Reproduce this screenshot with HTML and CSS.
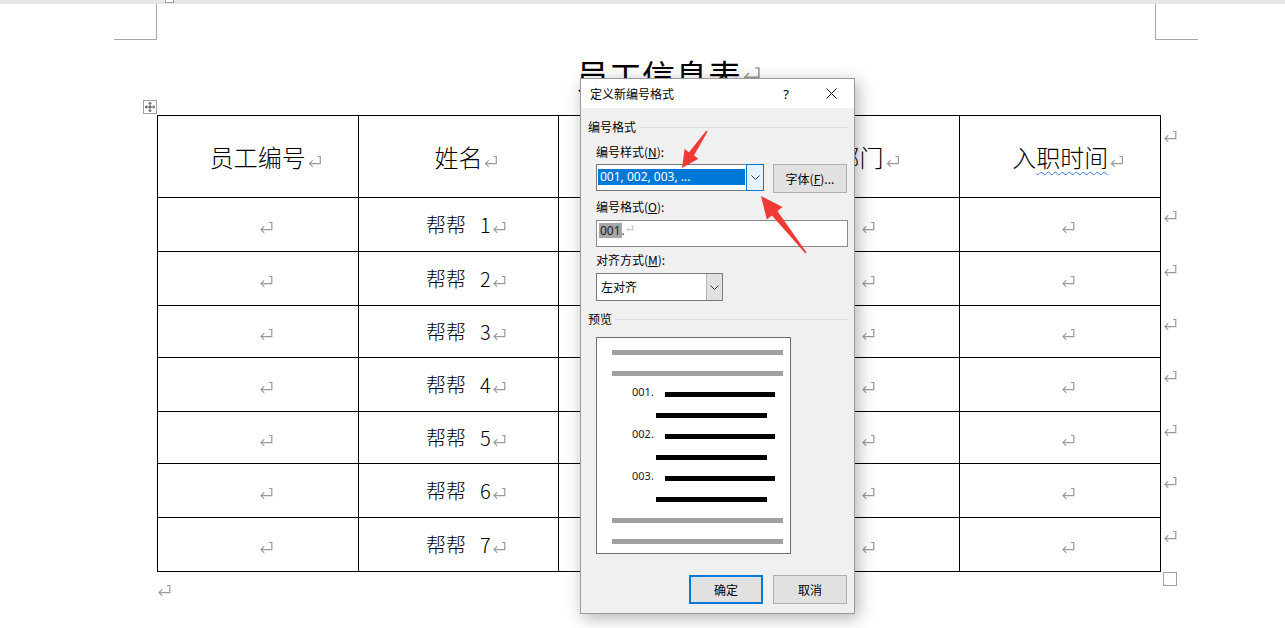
FILE: index.html
```html
<!DOCTYPE html>
<html lang="zh-CN">
<head>
    <meta charset="UTF-8">
    <title>员工信息表 - 定义新编号格式</title>
    <link rel="stylesheet" href="styles.css">
</head>
<body>

<!-- paragraph mark, reused everywhere -->
<svg class="defs" width="0" height="0">
    <symbol id="pm" viewBox="0 0 15 13">
        <path d="M10 1.5 H12.8 V8.6 H2" fill="none" stroke="currentColor" stroke-width="1.2"/>
        <path d="M5.2 5.4 L2 8.6 L5.2 11.8" fill="none" stroke="currentColor" stroke-width="1.2"/>
    </symbol>
    <symbol id="chev" viewBox="0 0 9 5">
        <path d="M0.5 0.5 L4.5 4.5 L8.5 0.5" fill="none" stroke="currentColor" stroke-width="1"/>
    </symbol>
</svg>

<div class="topbar"><span class="topbox"></span></div>

<div class="crop-row">
    <span class="crop crop-left"></span>
    <span class="crop crop-right"></span>
</div>

<div class="doc">
    <h1 class="title">员工信息表<svg class="pm pm-lg"><use href="#pm"/></svg></h1>

    <div class="table-wrap">
        <span class="move-handle">
            <svg viewBox="0 0 13 13"><path d="M6.5 1.5 V11.5 M1.5 6.5 H11.5 M5 3 L6.5 1.5 L8 3 M5 10 L6.5 11.5 L8 10 M3 5 L1.5 6.5 L3 8 M10 5 L11.5 6.5 L10 8" fill="none" stroke="#333" stroke-width="1"/></svg>
        </span>
        <table class="staff">
            <colgroup>
                <col class="c"><col class="c"><col class="c"><col class="c"><col class="c"><col class="end">
            </colgroup>
            <tr class="head">
                <td>员工编号<svg class="pm pm-md"><use href="#pm"/></svg></td>
                <td>姓名<svg class="pm pm-md"><use href="#pm"/></svg></td>
                <td><svg class="pm pm-md"><use href="#pm"/></svg></td>
                <td>部门<svg class="pm pm-md"><use href="#pm"/></svg></td>
                <td>入<span class="spell">职时间</span><svg class="pm pm-md"><use href="#pm"/></svg></td>
                <td class="row-end"><svg class="pm"><use href="#pm"/></svg></td>
            </tr>
            <tr class="r54">
                <td><svg class="pm"><use href="#pm"/></svg></td>
                <td>帮帮<span class="num">1</span><svg class="pm"><use href="#pm"/></svg></td>
                <td><svg class="pm"><use href="#pm"/></svg></td>
                <td><svg class="pm"><use href="#pm"/></svg></td>
                <td><svg class="pm"><use href="#pm"/></svg></td>
                <td class="row-end"><svg class="pm"><use href="#pm"/></svg></td>
            </tr>
            <tr class="r54">
                <td><svg class="pm"><use href="#pm"/></svg></td>
                <td>帮帮<span class="num">2</span><svg class="pm"><use href="#pm"/></svg></td>
                <td><svg class="pm"><use href="#pm"/></svg></td>
                <td><svg class="pm"><use href="#pm"/></svg></td>
                <td><svg class="pm"><use href="#pm"/></svg></td>
                <td class="row-end"><svg class="pm"><use href="#pm"/></svg></td>
            </tr>
            <tr class="r52">
                <td><svg class="pm"><use href="#pm"/></svg></td>
                <td>帮帮<span class="num">3</span><svg class="pm"><use href="#pm"/></svg></td>
                <td><svg class="pm"><use href="#pm"/></svg></td>
                <td><svg class="pm"><use href="#pm"/></svg></td>
                <td><svg class="pm"><use href="#pm"/></svg></td>
                <td class="row-end"><svg class="pm"><use href="#pm"/></svg></td>
            </tr>
            <tr class="r54">
                <td><svg class="pm"><use href="#pm"/></svg></td>
                <td>帮帮<span class="num">4</span><svg class="pm"><use href="#pm"/></svg></td>
                <td><svg class="pm"><use href="#pm"/></svg></td>
                <td><svg class="pm"><use href="#pm"/></svg></td>
                <td><svg class="pm"><use href="#pm"/></svg></td>
                <td class="row-end"><svg class="pm"><use href="#pm"/></svg></td>
            </tr>
            <tr class="r52">
                <td><svg class="pm"><use href="#pm"/></svg></td>
                <td>帮帮<span class="num">5</span><svg class="pm"><use href="#pm"/></svg></td>
                <td><svg class="pm"><use href="#pm"/></svg></td>
                <td><svg class="pm"><use href="#pm"/></svg></td>
                <td><svg class="pm"><use href="#pm"/></svg></td>
                <td class="row-end"><svg class="pm"><use href="#pm"/></svg></td>
            </tr>
            <tr class="r54">
                <td><svg class="pm"><use href="#pm"/></svg></td>
                <td>帮帮<span class="num">6</span><svg class="pm"><use href="#pm"/></svg></td>
                <td><svg class="pm"><use href="#pm"/></svg></td>
                <td><svg class="pm"><use href="#pm"/></svg></td>
                <td><svg class="pm"><use href="#pm"/></svg></td>
                <td class="row-end"><svg class="pm"><use href="#pm"/></svg></td>
            </tr>
            <tr class="r54">
                <td><svg class="pm"><use href="#pm"/></svg></td>
                <td>帮帮<span class="num">7</span><svg class="pm"><use href="#pm"/></svg></td>
                <td><svg class="pm"><use href="#pm"/></svg></td>
                <td><svg class="pm"><use href="#pm"/></svg></td>
                <td><svg class="pm"><use href="#pm"/></svg></td>
                <td class="row-end"><svg class="pm"><use href="#pm"/></svg></td>
            </tr>
        </table>
    </div>

    <div class="after-table">
        <svg class="pm pm-para"><use href="#pm"/></svg>
        <span class="resize-handle"></span>
    </div>
</div>

<!-- Word dialog: Define New Number Format -->
<div class="dialog">
    <div class="dlg-titlebar">
        <span class="dlg-title">定义新编号格式</span>
        <span class="dlg-help">?</span>
        <span class="dlg-close"><svg viewBox="0 0 11 11"><path d="M0.5 0.5 L10.5 10.5 M10.5 0.5 L0.5 10.5" stroke="#111" stroke-width="1"/></svg></span>
    </div>

    <div class="dlg-body">
        <div class="group-head"><span>编号格式</span><i class="rule"></i></div>

        <div class="field f-style">
            <div class="lbl">编号样式(<u>N</u>):</div>
            <div class="row">
                <div class="combo">
                    <span class="combo-value">001, 002, 003, ...</span>
                    <span class="combo-btn"><svg class="chev"><use href="#chev"/></svg></span>
                </div>
                <button class="btn btn-font">字体(<u>F</u>)...</button>
            </div>
        </div>

        <div class="field f-format">
            <div class="lbl">编号格式(<u>O</u>):</div>
            <div class="textbox"><span class="hl">001</span>.<svg class="pm pm-tiny"><use href="#pm"/></svg></div>
        </div>

        <div class="field f-align">
            <div class="lbl">对齐方式(<u>M</u>):</div>
            <div class="select">
                <span class="select-value">左对齐</span>
                <span class="select-btn"><svg class="chev"><use href="#chev"/></svg></span>
            </div>
        </div>

        <div class="group-head g-preview"><span>预览</span><i class="rule"></i></div>

        <div class="preview">
            <div class="pv-bar"></div>
            <div class="pv-bar"></div>
            <div class="pv-item"><span class="pv-num">001.</span><span class="pv-line"></span></div>
            <div class="pv-line pv-line-2"></div>
            <div class="pv-item"><span class="pv-num">002.</span><span class="pv-line"></span></div>
            <div class="pv-line pv-line-2"></div>
            <div class="pv-item"><span class="pv-num">003.</span><span class="pv-line"></span></div>
            <div class="pv-line pv-line-2"></div>
            <div class="pv-bar"></div>
            <div class="pv-bar"></div>
        </div>

        <div class="dlg-buttons">
            <button class="btn btn-default">确定</button>
            <button class="btn">取消</button>
        </div>
    </div>
</div>

<!-- red annotation arrows drawn over the screenshot -->
<svg class="arrows" viewBox="0 0 1285 628">
    <polygon points="707.6,131.4 694.0,155.6 698.4,158.8 682,168 684.6,149.0 689.0,152.2 706.4,130.6"/>
    <polygon points="806.6,252.5 777.4,211.1 782.5,207.1 761,196 766.8,219.5 771.9,215.5 805.4,253.5"/>
</svg>

</body>
</html>
```

FILE: styles.css
```css
* {
    box-sizing: border-box;
}
body {
    margin: 0;
    width: 1285px;
    height: 628px;
    overflow: hidden;
    position: relative;
    background-color: #fff;
    color: #000;
    font-family: "Noto Sans CJK SC", "Noto Sans", sans-serif;
}
.defs {
    position: absolute;
}

/* page chrome */
.topbar {
    height: 4px;
    padding-left: 165px;
    background-color: #e6e6e6;
}
.topbox {
    display: block;
    width: 9px;
    height: 3px;
    border: 1px solid #a0a0a0;
    border-top: none;
    background-color: #fff;
}
.crop-row {
    display: flex;
    justify-content: space-between;
    margin: 0 87px 0 114px;
}
.crop {
    height: 36px;
    border-bottom: 1px solid #a6a6a6;
}
.crop-left {
    width: 43px;
    border-right: 1px solid #a6a6a6;
}
.crop-right {
    width: 43px;
    border-left: 1px solid #a6a6a6;
}

/* paragraph marks */
.pm {
    width: 15px;
    height: 13px;
    margin-left: 1px;
    margin-right: -16px;
    color: #9a9a9a;
    vertical-align: -1px;
}
.pm-lg {
    width: 20px;
    height: 17px;
    margin-right: -21px;
    vertical-align: 6px;
}
.pm-md {
    width: 16px;
    height: 13px;
    margin-right: -17px;
}

/* document */
.doc {
    margin-left: 157px;
    width: 1020px;
}
.title {
    width: 1003px;
    margin: 15px 0 20px;
    font-size: 33px;
    font-weight: normal;
    line-height: 40px;
    text-align: center;
}
.table-wrap {
    position: relative;
}
.move-handle {
    position: absolute;
    left: -14px;
    top: -15px;
    width: 14px;
    height: 14px;
    border: 1px solid #a0a0a0;
    background-color: #fff;
}
.move-handle svg {
    display: block;
    width: 12px;
    height: 12px;
}
.staff {
    border-collapse: collapse;
    table-layout: fixed;
    width: 1020px;
}
.staff col.c {
    width: 200.6px;
}
.staff col.end {
    width: 17px;
}
.staff td {
    border: 1px solid #000;
    padding: 0;
    text-align: center;
    vertical-align: middle;
    font-size: 20px;
    font-weight: 300;
    line-height: 26px;
}
.staff .head {
    height: 82px;
}
.staff .head td {
    font-size: 24px;
}
.staff .r54 {
    height: 54px;
}
.staff .r52 {
    height: 52px;
}
.staff td.row-end {
    border: none;
    text-align: left;
    vertical-align: top;
    padding: 9px 0 0 1px;
    line-height: 14px;
}
.num {
    margin-left: 14px;
}
.spell {
    text-decoration: underline wavy #3b78d8 1px;
    text-underline-offset: 4px;
}
.after-table {
    display: flex;
    justify-content: space-between;
    align-items: flex-start;
}
.pm-para {
    margin: 12px 0 0;
}
.resize-handle {
    width: 14px;
    height: 14px;
    margin-top: 0;
    border: 1px solid #a0a0a0;
}

/* dialog */
.dialog {
    position: absolute;
    left: 580px;
    top: 78px;
    width: 275px;
    height: 536px;
    border: 1px solid #9a9a9a;
    background-color: #f0f0f0;
    box-shadow: 3px 4px 16px rgba(0, 0, 0, 0.3);
    font-size: 12px;
}
.dlg-titlebar {
    display: flex;
    align-items: center;
    height: 29px;
    padding-left: 9px;
    background-color: #fff;
}
.dlg-title {
    flex: 1;
}
.dlg-help {
    width: 44px;
    text-align: center;
    font-size: 13px;
    font-family: "Noto Sans", sans-serif;
}
.dlg-close {
    width: 46px;
    display: flex;
    justify-content: center;
}
.dlg-close svg {
    width: 11px;
    height: 11px;
}
.dlg-body {
    padding: 11px 6px 0 7px;
}
.group-head {
    display: flex;
    align-items: center;
    line-height: 16px;
}
.group-head .rule {
    flex: 1;
    height: 1px;
    margin-left: 4px;
    background-color: #dcdcdc;
}
.g-preview {
    margin-top: 10px;
}
.field {
    padding-left: 8px;
}
.lbl {
    line-height: 16px;
}
.f-style {
    margin-top: 9px;
}
.f-style .lbl {
    margin-bottom: 4px;
}
.f-format {
    margin-top: 6px;
}
.f-align {
    margin-top: 5px;
}
.f-format .lbl,
.f-align .lbl {
    margin-bottom: 5px;
}
.row {
    display: flex;
    align-items: flex-start;
    gap: 9px;
}
.combo {
    display: flex;
    width: 168px;
    height: 27px;
    border: 1px solid #7a7a7a;
    background-color: #fff;
}
.combo-value {
    flex: 1;
    margin: 4px 1px 5px 1px;
    padding-left: 2px;
    background-color: #0078d7;
    color: #fff;
    line-height: 16px;
    font-family: "Noto Sans", sans-serif;
}
.combo-btn {
    width: 18px;
    margin: -1px -1px -1px 0;
    border: 1px solid #0078d7;
    background-color: #e5f1fb;
    display: flex;
    align-items: center;
    justify-content: center;
    color: #333;
}
.chev {
    width: 9px;
    height: 5px;
}
.btn {
    height: 29px;
    width: 74px;
    padding: 0;
    border: 1px solid #adadad;
    background-color: #e1e1e1;
    font-family: "Noto Sans CJK SC", "Noto Sans", sans-serif;
    font-size: 12px;
    color: #000;
}
.btn-font {
    margin-top: 0;
}
.textbox {
    width: 252px;
    height: 27px;
    padding: 2px 0 0 2px;
    border: 1px solid #8a8a8a;
    background-color: #fff;
    line-height: 16px;
    font-family: "Noto Sans", sans-serif;
    color: #333;
}
.textbox .hl {
    display: inline-block;
    padding: 0 1px;
    line-height: 15px;
    background-color: #a6a6a6;
    color: #222;
}
.pm-tiny {
    width: 8px;
    height: 7px;
    margin-left: 1px;
    margin-right: 0;
    vertical-align: 3px;
}
.select {
    display: flex;
    width: 127px;
    height: 28px;
    border: 1px solid #7a7a7a;
    background-color: #fff;
}
.select-value {
    flex: 1;
    padding-left: 4px;
    line-height: 25px;
}
.select-btn {
    width: 16px;
    border-left: 1px solid #b4b4b4;
    background-color: #e1e1e1;
    display: flex;
    align-items: center;
    justify-content: center;
    color: #333;
}

/* preview */
.preview {
    display: flex;
    flex-direction: column;
    gap: 16px;
    width: 195px;
    height: 217px;
    margin: 10px 0 0 8px;
    padding: 12px 0 0 15px;
    border: 1px solid #6f6f6f;
    background-color: #fff;
}
.pv-bar {
    width: 171px;
    height: 5px;
    background-color: #a0a0a0;
}
.pv-item {
    display: flex;
    align-items: flex-end;
    height: 5px;
    padding-left: 20px;
}
.pv-num {
    width: 33px;
    margin-bottom: 0;
    font-family: "Noto Sans", sans-serif;
    font-size: 11px;
    line-height: 11px;
    color: #1a1a1a;
}
.pv-line {
    width: 110px;
    height: 5px;
    background-color: #000;
}
.pv-line-2 {
    width: 111px;
    margin-left: 44px;
}
.dlg-buttons {
    display: flex;
    justify-content: flex-end;
    gap: 10px;
    margin-top: 21px;
    padding-right: 1px;
}
.btn-default {
    border: 2px solid #0078d7;
}

/* annotation arrows */
.arrows {
    position: absolute;
    left: 0;
    top: 0;
    width: 1285px;
    height: 628px;
    pointer-events: none;
}
.arrows polygon {
    fill: #ef3a35;
}
```
